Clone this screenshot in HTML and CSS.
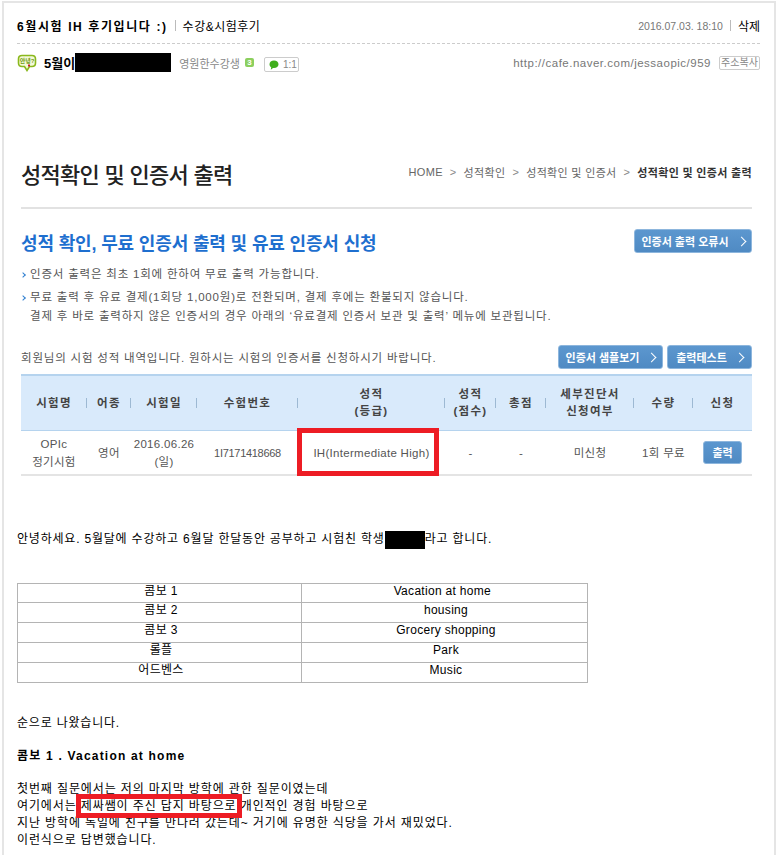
FILE: index.html
```html
<!DOCTYPE html>
<html lang="ko">
<head>
  <meta charset="UTF-8" />
  <title>6월시험 IH 후기입니다 :)</title>
  <link rel="stylesheet" href="styles.css">
</head>
<body>
  <div class="frame">

    <!-- 글 제목 -->
    <div class="post-title">
      <div class="title-left">
        <strong>6월시험 IH 후기입니다 :)</strong>
        <span class="bar"></span>
        <span class="board">수강&amp;시험후기</span>
      </div>
      <div class="title-right">
        <span class="date">2016.07.03. 18:10</span>
        <span class="bar"></span>
        <span class="del">삭제</span>
      </div>
    </div>

    <!-- 작성자 -->
    <div class="post-author">
      <div class="author-left">
        <svg class="level-icon" width="20" height="18" viewBox="0 0 20 18">
          <path d="M5 1.500h10q3.500 0 3.500 3.500v4q0 3.500-3.500 3.500h-2.500L10 16.500 7.500 12.500H5Q1.500 12.500 1.500 9V5Q1.500 1.500 5 1.500z" fill="#f4f9d8" stroke="#8ab81d" stroke-width="1.600"/>
          <text x="10" y="9" class="icon-text" text-anchor="middle">안녕?</text>
          <rect x="11" y="10.500" width="2" height="2" fill="#c8202a"/>
        </svg>
        <strong class="nick">5월이</strong><span class="redact redact-nick"></span>
        <span class="grade">영원한수강생</span>
        <span class="grade-badge">3</span>
        <span class="chat-btn">
          <svg width="10" height="10" viewBox="0 0 10 10"><path d="M5 .5c2.600 0 4.500 1.600 4.500 3.700S7.600 7.900 5 7.900H4L1.800 9.700l.4-2.400C1.100 6.600.5 5.500.5 4.200.5 2.100 2.400.5 5 .5z" fill="#3fae1c"/></svg>
          <span>1:1</span>
        </span>
      </div>
      <div class="author-right">
        <span class="url">http://cafe.naver.com/jessaopic/959</span>
        <span class="copy-btn">주소복사</span>
      </div>
    </div>

    <!-- 첨부 이미지: 성적확인 화면 -->
    <div class="cert">
      <div class="cert-head">
        <h2>성적확인 및 인증서 출력</h2>
        <div class="crumbs">
          <span>HOME</span><i>&gt;</i><span>성적확인</span><i>&gt;</i><span>성적확인 및 인증서</span><i>&gt;</i><b>성적확인 및 인증서 출력</b>
        </div>
      </div>

      <div class="cert-sub">
        <h3>성적 확인, 무료 인증서 출력 및 유료 인증서 신청</h3>
        <a class="btn btn-error">인증서 출력 오류시<i></i></a>
      </div>

      <ul class="notes">
        <li>인증서 출력은 최초 1회에 한하여 무료 출력 가능합니다.</li>
        <li>무료 출력 후 유료 결제(1회당 1,000원)로 전환되며, 결제 후에는 환불되지 않습니다.<br>결제 후 바로 출력하지 않은 인증서의 경우 아래의 ‘유료결제 인증서 보관 및 출력’ 메뉴에 보관됩니다.</li>
      </ul>

      <div class="table-top">
        <p>회원님의 시험 성적 내역입니다. 원하시는 시험의 인증서를 신청하시기 바랍니다.</p>
        <div class="table-btns">
          <a class="btn btn-sample">인증서 샘플보기<i></i></a>
          <a class="btn btn-test">출력테스트<i></i></a>
        </div>
      </div>

      <table class="score">
        <colgroup>
          <col class="c1"><col class="c2"><col class="c3"><col class="c4"><col class="c5">
          <col class="c6"><col class="c7"><col class="c8"><col class="c9"><col class="c10">
        </colgroup>
        <thead>
          <tr>
            <th>시험명</th>
            <th>어종</th>
            <th>시험일</th>
            <th>수험번호</th>
            <th>성적<br>(등급)</th>
            <th>성적<br>(점수)</th>
            <th>총점</th>
            <th>세부진단서<br>신청여부</th>
            <th>수량</th>
            <th>신청</th>
          </tr>
        </thead>
        <tbody>
          <tr>
            <td>OPIc<br>정기시험</td>
            <td>영어</td>
            <td>2016.06.26<br>(일)</td>
            <td class="exam-no">1I7171418668</td>
            <td class="marked">IH(Intermediate High)<span class="red-box"></span></td>
            <td>-</td>
            <td>-</td>
            <td>미신청</td>
            <td>1회 무료</td>
            <td><a class="btn btn-print">출력</a></td>
          </tr>
        </tbody>
      </table>
    </div>

    <!-- 본문 -->
    <div class="post-body">
      <p class="intro">안녕하세요. 5월달에 수강하고 6월달 한달동안 공부하고 시험친 학생<span class="redact redact-name"></span>라고 합니다.</p>

      <table class="combo">
        <tr><td>콤보 1</td><td>Vacation at home&nbsp;&nbsp;</td></tr>
        <tr><td>콤보 2</td><td>housing</td></tr>
        <tr><td>콤보 3</td><td>Grocery shopping</td></tr>
        <tr><td>롤플</td><td>Park</td></tr>
        <tr><td>어드벤스</td><td>Music</td></tr>
      </table>

      <p class="order">순으로 나왔습니다.</p>
      <p class="combo-title">콤보 1 . Vacation at home</p>
      <p class="answer">
        첫번째 질문에서는 저의 마지막 방학에 관한 질문이였는데<br>
        여기에서는 <span class="marked-text">제싸쌤이 주신 답지 바탕으로</span> 개인적인 경험 바탕으로<br>
        지난 방학에 독일에 친구를 만나러 갔는데~ 거기에 유명한 식당을 가서 재밌었다.<br>
        이런식으로 답변했습니다.
      </p>
    </div>

  </div>
</body>
</html>
```

FILE: styles.css
```css
html, body {
  margin: 0;
  padding: 0;
  height: 855px;
  overflow: hidden;
  background: #fff;
  font-family: "Liberation Sans", "Noto Sans CJK KR", sans-serif;
  font-size: 12px;
  color: #000;
}

p, h2, h3, ul {
  margin: 0;
  padding: 0;
}

.frame {
  box-sizing: border-box;
  width: 774px;
  height: 854px;
  margin: 1px 0 0 2px;
  border: 2px solid #e5e5e5;
  border-bottom: none;
  overflow: hidden;
}

/* 글 제목 */
.post-title {
  display: flex;
  justify-content: space-between;
  align-items: center;
  height: 41px;
  margin: 0 14px 0 13px;
  padding-top: 5px;
  box-sizing: border-box;
  border-bottom: 1px dashed #ccc;
}

.title-left, .title-right, .author-left, .author-right {
  display: flex;
  align-items: center;
}

.bar {
  width: 1px;
  height: 11px;
  margin: 0 7px;
  background: #bbb;
}

.post-title strong {
  letter-spacing: 1.6px;
}

.board {
  letter-spacing: 0.5px;
}

.date {
  color: #777;
  font-size: 10.500px;
}

/* 작성자 */
.post-author {
  display: flex;
  justify-content: space-between;
  align-items: center;
  height: 37px;
  margin: 0 14px 0 13px;
}

.level-icon {
  margin-right: 7px;
}

.icon-text {
  fill: #6f9a10;
  font-size: 6px;
  font-weight: 700;
}

.nick {
  font-size: 13px;
}

.redact {
  display: inline-block;
  background: #000;
}

.redact-nick {
  width: 96px;
  height: 19px;
  margin-right: 8px;
}

.grade {
  color: #888;
  font-size: 11px;
}

.grade-badge {
  width: 9px;
  height: 9px;
  margin: 0 10px 0 5px;
  border-radius: 2px;
  background: #8ccf5e;
  color: #fff;
  font-size: 8px;
  font-weight: bold;
  line-height: 9px;
  text-align: center;
}

.chat-btn {
  display: flex;
  align-items: center;
  gap: 4px;
  box-sizing: border-box;
  width: 35px;
  height: 15px;
  margin-top: 4px;
  padding-left: 4px;
  border: 1px solid #ccc;
  border-radius: 2px;
  color: #888;
  font-size: 10px;
}

.url {
  color: #777;
  font-size: 11.500px;
  letter-spacing: 0.5px;
}

.copy-btn {
  box-sizing: border-box;
  width: 41px;
  height: 14px;
  margin-left: 8px;
  border: 1px solid #ccc;
  border-radius: 2px;
  color: #888;
  font-size: 10px;
  line-height: 12px;
  text-align: center;
}

/* 성적확인 화면 */
.cert {
  width: 731px;
  margin: 0 0 0 17px;
  padding-top: 74px;
  color: #555;
  font-size: 11.500px;
  letter-spacing: 0.8px;
}

.cert-head {
  display: flex;
  justify-content: space-between;
  align-items: center;
  height: 36px;
  padding-bottom: 16px;
  border-bottom: 2px solid #e2e2e2;
}

.cert-head h2 {
  color: #222;
  font-size: 22px;
  font-weight: 500;
  letter-spacing: -0.7px;
}

.crumbs {
  display: flex;
  align-items: center;
  margin-bottom: 2px;
  font-size: 11px;
  letter-spacing: 0.33px;
  color: #666;
}

.crumbs i {
  margin: 0 7px;
  font-style: normal;
  color: #888;
}

.crumbs b {
  color: #333;
}

.cert-sub {
  display: flex;
  justify-content: space-between;
  align-items: flex-start;
  height: 24px;
  margin-top: 20px;
}

.cert-sub h3 {
  margin-top: 3px;
  color: #1e6fcf;
  font-size: 18px;
  font-weight: 700;
  line-height: 24px;
  letter-spacing: -0.15px;
}

.btn {
  display: flex;
  align-items: center;
  justify-content: center;
  box-sizing: border-box;
  height: 24px;
  border: 1px solid #8db6dd;
  border-radius: 3px;
  background: linear-gradient(#5c97cf, #4f8ac3);
  color: #fff;
  font-size: 11px;
  font-weight: 700;
  letter-spacing: 0;
}

/* 버튼 화살표 */
.btn i {
  width: 6px;
  height: 6px;
  margin-left: 9px;
  border-top: 1.500px solid #fff;
  border-right: 1.500px solid #fff;
  transform: rotate(45deg);
}

.btn-error {
  width: 118px;
}

.notes {
  margin-top: 12px;
  list-style: none;
  line-height: 19px;
}

.notes li {
  position: relative;
  padding-left: 9px;
  margin-bottom: 4px;
}

.notes li::before {
  content: "";
  position: absolute;
  left: 0;
  top: 8px;
  width: 3px;
  height: 3px;
  border-top: 1.500px solid #2f7fd0;
  border-right: 1.500px solid #2f7fd0;
  transform: rotate(45deg);
}

.table-top {
  display: flex;
  justify-content: space-between;
  align-items: center;
  margin-top: 19px;
}

.table-btns {
  display: flex;
  gap: 4px;
}

.btn-sample {
  width: 105px;
}

.btn-test {
  width: 85px;
}

.score {
  width: 731px;
  margin-top: 5px;
  border-collapse: collapse;
  table-layout: fixed;
}

.c1 { width: 66px; }
.c2 { width: 44px; }
.c3 { width: 66px; }
.c4 { width: 101px; }
.c5 { width: 147px; }
.c6 { width: 51px; }
.c7 { width: 50px; }
.c8 { width: 88px; }
.c9 { width: 59px; }
.c10 { width: 59px; }

.score th {
  position: relative;
  height: 54px;
  padding: 0;
  border-top: 2px solid #b5d3ee;
  border-bottom: 1px solid #b5d3ee;
  background: #d9eafb;
  color: #444;
  font-size: 11.500px;
  line-height: 17px;
  letter-spacing: 1.3px;
}

.score th:not(:last-child)::after {
  content: "";
  position: absolute;
  right: 0;
  top: 22px;
  width: 1px;
  height: 10px;
  background: #9db9d3;
}

.score td {
  position: relative;
  height: 43px;
  padding: 0;
  border-bottom: 2px solid #e4e4e4;
  text-align: center;
  line-height: 18px;
  letter-spacing: 0.3px;
}

.score td.exam-no {
  font-size: 11px;
  letter-spacing: -0.3px;
}

.score td .btn-print {
  width: 39px;
  height: 23px;
  margin-left: 10px;
}

.red-box {
  position: absolute;
  left: -1px;
  top: -3px;
  width: 142px;
  height: 48px;
  box-sizing: border-box;
  border: 5px solid #ed1c24;
}

/* 본문 */
.post-body {
  margin: 0 0 0 13px;
  font-size: 12px;
  line-height: 17px;
  letter-spacing: 0.8px;
}

.intro {
  margin-top: 55px;
}

.redact-name {
  width: 40px;
  height: 18px;
  vertical-align: middle;
}

.combo {
  width: 571px;
  margin-top: 34px;
  border-collapse: collapse;
  table-layout: fixed;
  letter-spacing: 0.3px;
}

.combo td {
  height: 19px;
  padding: 0 0 0 3px;
  border: 1px solid #b4b4b4;
  text-align: center;
  vertical-align: top;
  line-height: 14px;
}

.combo tr:first-child td {
  height: 18px;
}

.combo td:first-child {
  width: 280px;
}

.order {
  margin-top: 32px;
}

.combo-title {
  margin-top: 16px;
  font-weight: 700;
  letter-spacing: 1.2px;
}

.answer {
  margin-top: 16px;
  letter-spacing: 0.88px;
}

.marked-text {
  outline: 5px solid #ed1c24;
}
```
